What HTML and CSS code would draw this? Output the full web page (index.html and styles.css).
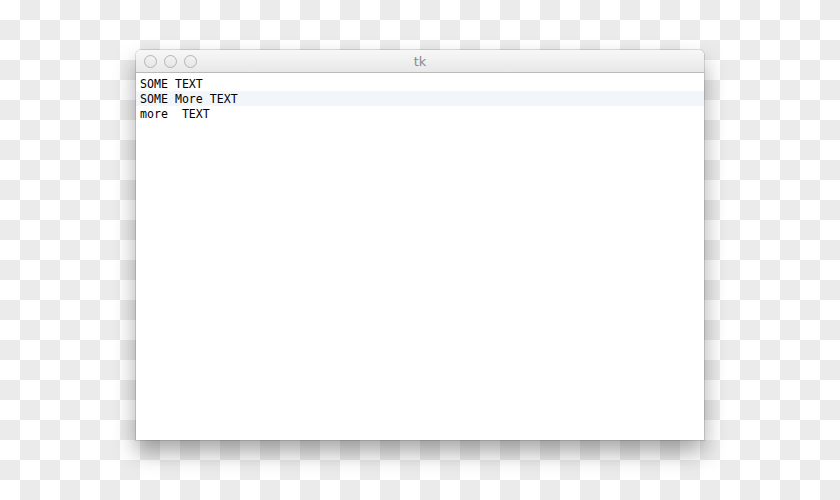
FILE: index.html
```html
<!DOCTYPE html>
<html>
<head>
<meta charset="utf-8">
<link rel="stylesheet" href="styles.css">
</head>
<body>
<div class="window">
  <div class="titlebar">
    <div class="lights">
      <span class="light"></span>
      <span class="light"></span>
      <span class="light"></span>
    </div>
    <div class="title">tk</div>
  </div>
  <div class="content">
    <div class="line">SOME TEXT</div>
    <div class="line current">SOME More TEXT</div>
    <div class="line">more&nbsp;&nbsp;TEXT</div>
  </div>
</div>
</body>
</html>
```
FILE: styles.css
```css
html {
  width: 840px;
  height: 500px;
  background: repeating-conic-gradient(#ebebeb 0 25%, #ffffff 0 50%) 0 0 / 40px 40px;
}
body {
  margin: 0;
  padding: 50px 0 0 136px;
  width: 840px;
  height: 500px;
  box-sizing: border-box;
  overflow: hidden;
}
.window {
  width: 568px;
  height: 390px;
  display: flex;
  flex-direction: column;
  background: #ffffff;
  border-radius: 5px 5px 0 0;
  box-shadow: 0 12px 22px rgba(0, 0, 0, 0.35), 0 0 0 1px rgba(0, 0, 0, 0.12);
  overflow: hidden;
}
.titlebar {
  height: 22px;
  flex: none;
  position: relative;
  display: flex;
  align-items: center;
  justify-content: center;
  background: linear-gradient(#f7f7f7, #e8e8e8);
  border-bottom: 1px solid #b9b9b9;
}
.lights {
  position: absolute;
  left: 8px;
  top: 5px;
  display: flex;
  gap: 7px;
}
.light {
  width: 11px;
  height: 11px;
  border-radius: 50%;
  border: 1px solid #b3b3b3;
  background: linear-gradient(#f2f2f2, #e6e6e6);
}
.title {
  font-family: "DejaVu Sans", sans-serif;
  font-size: 13px;
  color: #8a8a8a;
}
.content {
  flex: 1;
  padding-top: 3px;
  font-family: "DejaVu Sans Mono", monospace;
  font-size: 11.6px;
  line-height: 15px;
  color: #000;
}
.line {
  box-sizing: border-box;
  padding: 1px 0 0 4px;
  height: 15px;
  white-space: pre;
}
.current {
  background: #f2f5f9;
}
```
